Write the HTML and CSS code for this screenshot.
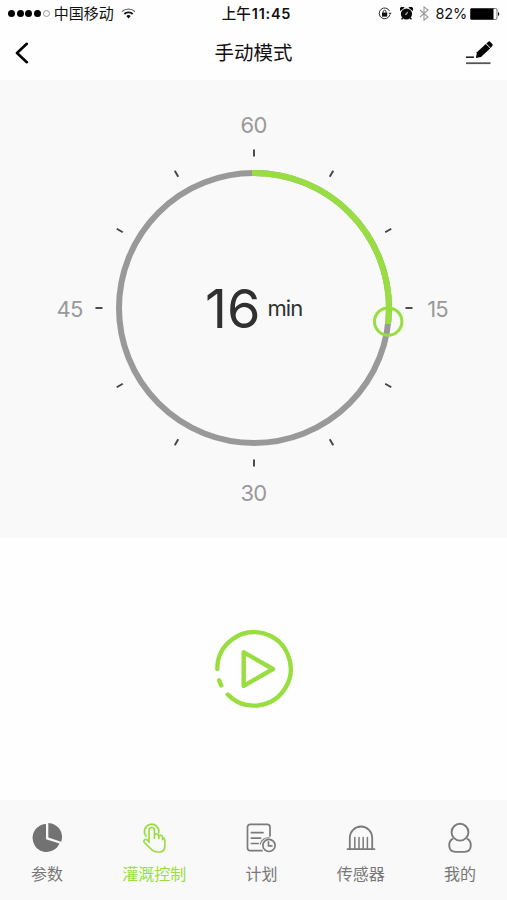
FILE: index.html
```html
<!DOCTYPE html>
<html lang="zh-CN">
<head>
<meta charset="UTF-8">
<meta name="viewport" content="width=device-width, initial-scale=1.0">
<title>手动模式</title>
<link rel="stylesheet" href="styles.css">
</head>
<body>

<div class="app">

  <!-- 状态栏 -->
  <div class="status">
    <div class="status-left">
      <div class="signal"><i></i><i></i><i></i><i></i><i class="off"></i></div>
      <span class="carrier">中国移动</span>
      <svg width="15" height="11" viewBox="0 0 15 11" fill="none" stroke="#111">
        <path d="M1 3.6a9.4 9.4 0 0 1 13 0" stroke-width="1.1" stroke="#555"/>
        <path d="M3.3 6a6.1 6.1 0 0 1 8.4 0" stroke-width="1.8"/>
        <path d="M5.3 8.1a3.1 3.1 0 0 1 4.4 0L7.5 10.4z" fill="#111" stroke="none"/>
      </svg>
    </div>
    <span class="time">上午<b>11:45</b></span>
    <div class="status-right">
      <svg class="lock" width="14" height="13" viewBox="0 0 14 13" fill="none" stroke="#333">
        <path d="M11.6 4.2A5.4 5.4 0 1 0 11.8 8"/>
        <path d="M10.4 5.8h3.2L12 8z" fill="#333" stroke="none"/>
        <rect x="4" y="5.6" width="5.2" height="4" fill="#111" stroke="none"/>
        <path d="M5.1 6V4.8a1.5 1.5 0 0 1 3 0V6"/>
      </svg>
      <svg width="13" height="13" viewBox="0 0 13 13" fill="#0a0a0a">
        <circle cx="6.5" cy="7" r="5.6"/>
        <path d="M.3 4A2.6 2.6 0 0 1 4.5.8zM12.7 4A2.6 2.6 0 0 0 8.5.8z"/>
        <path d="M2.7 10.8l-1 1.6M10.3 10.8l1 1.6" stroke="#0a0a0a" stroke-width="1.4"/>
        <path d="M7.4 4.8L6.7 7.2H5" fill="none" stroke="#fff" stroke-width=".8"/>
      </svg>
      <svg width="10" height="15" viewBox="0 0 10 15" fill="none" stroke="#999" stroke-width="1.1">
        <path d="M1 4l8 7-4 3.2V.8L9 4l-8 7"/>
      </svg>
      <span class="percent">82%</span>
      <svg width="30" height="12" viewBox="0 0 30 12">
        <rect x=".5" y=".5" width="26.5" height="11" rx="1.5" fill="#fff" stroke="#555" stroke-width=".8"/>
        <rect x=".5" y=".5" width="23" height="11" fill="#000"/>
        <path d="M28 4a2.2 2.2 0 0 1 0 4z" fill="#111"/>
      </svg>
    </div>
  </div>

  <!-- 导航栏 -->
  <header class="nav">
    <svg width="14" height="22" viewBox="0 0 14 22" fill="none" stroke="#000" stroke-width="2.6" stroke-linecap="round" stroke-linejoin="round">
      <path d="M11.8 1.8L2 11l9.8 9.2"/>
    </svg>
    <h1 class="nav-title">手动模式</h1>
    <svg width="28" height="24" viewBox="0 0 28 24">
      <path d="M1 16.2h8" stroke="#222" stroke-width="1.6"/>
      <path d="M1 22.2h24.5" stroke="#555" stroke-width="1.8"/>
      <path d="M10.9 17l1-5.8L20.8 3l4.3 4.6-9.1 8.4z" fill="#000"/>
      <path d="M21.4 2.5l1.9-1.7q1.1-.9 2.1.1l1.9 2.1q.9 1.1-.1 2.1L25.7 7z" fill="#000"/>
    </svg>
  </header>

  <!-- 时间表盘 -->
  <section class="dial">
    <svg width="420" height="420" viewBox="-210 -210 420 420">
      <g class="ticks">
        <path d="M0-158.5v7"/>
        <path d="M0-158.5v7" transform="rotate(30)"/>
        <path d="M0-158.5v7" transform="rotate(60)"/>
        <path d="M0-158.5v7" transform="rotate(90)"/>
        <path d="M0-158.5v7" transform="rotate(120)"/>
        <path d="M0-158.5v7" transform="rotate(150)"/>
        <path d="M0-158.5v7" transform="rotate(180)"/>
        <path d="M0-158.5v7" transform="rotate(210)"/>
        <path d="M0-158.5v7" transform="rotate(240)"/>
        <path d="M0-158.5v7" transform="rotate(270)"/>
        <path d="M0-158.5v7" transform="rotate(300)"/>
        <path d="M0-158.5v7" transform="rotate(330)"/>
      </g>
      <circle class="ring" r="135"/>
      <path class="progress" d="M-2-135H0A135 135 0 0 1 134 16"/>
      <circle class="knob" cx="134.2" cy="13.6" r="13.7"/>
      <g class="scale">
        <text x="-.5" y="-175.4">60</text>
        <text x="183.5" y="8.6">15</text>
        <text x="-.5" y="192.6">30</text>
        <text x="-184.5" y="8.6">45</text>
      </g>
      <text class="minutes" x="-49" y="19.5">16</text>
      <text class="unit" x="13.5" y="8">min</text>
    </svg>
  </section>

  <!-- 开始灌溉 -->
  <section class="action">
    <svg width="80" height="80" viewBox="-40 -40 80 80" fill="none" stroke="#98de40" stroke-width="4.4" stroke-linecap="round" stroke-linejoin="round">
      <path d="M-36.7 0A36.7 36.7 0 1 1-26.2 25.6"/>
      <path d="M-34.9 11.3a37 37 0 0 0 2.2 5.1"/>
      <path d="M-10.3-16.7V16.9L19 0z"/>
    </svg>
  </section>

  <!-- 底部标签栏 -->
  <nav class="tabs">
    <div class="tab">
      <svg width="32" height="32" viewBox="0 0 32 32" fill="#727272">
        <path d="M15 2A14 14 0 1 0 28.4 21.6L15 17.2z"/>
        <path d="M17.3 1A14 14 0 0 1 30.2 19.8L17.3 15.6z"/>
      </svg>
      <span>参数</span>
    </div>
    <div class="tab tab--on">
      <svg width="32" height="32" viewBox="0 0 32 32" fill="none" stroke="#98de40" stroke-width="1.7" stroke-linecap="round" stroke-linejoin="round">
        <path d="M8.2 14.2A7.2 7.2 0 1 1 20.7 10.7"/>
        <path d="M11.1 20V8.2a2.7 2.7 0 0 1 5.4 0v8M16.5 13.2q.3-1.6 2-1.4 2 .1 2.3 2v2.7M20.8 14.6q.2-1.4 1.9-1.2 1.7.2 1.9 2v2M24.600 16.300q2-.8 2.200 1.800v6.200q0 5.700-5.600 5.700h-2q-2.700 0-4.700-1.600l-8.200-7.900q-1.100-1.300.1-2.500 1.300-1.200 2.700-.2l2 2.200"/>
      </svg>
      <span>灌溉控制</span>
    </div>
    <div class="tab">
      <svg width="32" height="32" viewBox="0 0 32 32" fill="none" stroke="#7b7b7b" stroke-width="1.7" stroke-linecap="round" stroke-linejoin="round">
        <path d="M17 28.7H5.3q-2.8 0-2.8-2.8V5.1q0-2.8 2.8-2.8h16.9q2.8 0 2.8 2.8V14"/>
        <path d="M6.4 10.7H18M6.4 16.2h9.2M6.4 21.5h6.8"/>
        <path d="M15.3 22.2a8 8 0 0 1 8.9-6.4" stroke-width="1.1"/>
        <circle cx="24" cy="23.4" r="6.1"/>
        <path d="M23.5 19.9v4h3.3"/>
      </svg>
      <span>计划</span>
    </div>
    <div class="tab">
      <svg width="32" height="32" viewBox="0 0 32 32" fill="none" stroke="#7b7b7b" stroke-width="1.8" stroke-linecap="round">
        <path d="M2.5 27.1h27"/>
        <path d="M4.8 26.5V15.7a11.2 11.2 0 0 1 22.4 0V26.5"/>
        <path d="M9.8 15.5v11M14 15.5v11M18.2 15.5v11M22.4 15.5v11" stroke-width="1.5"/>
      </svg>
      <span>传感器</span>
    </div>
    <div class="tab">
      <svg width="32" height="32" viewBox="0 0 32 32" fill="none" stroke="#7b7b7b" stroke-width="1.9" stroke-linejoin="round">
        <circle cx="16" cy="10.2" r="8.4"/>
        <path d="M9 16.7q-3.8 2-3.8 6.4 0 6.8 6.3 6.8h9q6.3 0 6.3-6.8 0-4.4-3.8-6.4"/>
      </svg>
      <span>我的</span>
    </div>
  </nav>

</div>

</body>
</html>
```
FILE: styles.css
```css
:root {
  --green: #98de40;
  --panel: #f9f9f9;
  --gray: #999999;
  --text: #303030;
}
* { margin: 0; padding: 0; box-sizing: border-box; }
body {
  background: #fefefe;
  color: var(--text);
  font-family: "Inter", "Noto Sans CJK SC", sans-serif;
}
svg { display: block; flex: none; }
.app {
  height: 900px;
  display: flex;
  flex-direction: column;
}

/* ---------- 状态栏 ---------- */
.status {
  height: 27px;
  padding: 0 7px 0 8px;
  display: grid;
  grid-template-columns: 1fr auto 1fr;
  align-items: center;
  line-height: 27px;
  color: #111;
}
.status-left, .status-right { display: flex; align-items: center; }
.signal { display: flex; gap: 1.7px; }
.signal i { width: 7px; height: 7px; border-radius: 50%; background: #000; }
.signal .off { background: none; border: 1px solid #999; }
.carrier { font-size: 15px; margin: 0 7px 0 4px; }
.time { font-size: 14.5px; font-weight: 500; padding-left: 5px; }
.time b { font-weight: 600; letter-spacing: 0.75px; margin-left: 1px; }
.status-right { justify-content: flex-end; gap: 6px; }
.lock { margin-right: 2px; }
.percent { font-size: 14.5px; letter-spacing: -0.2px; margin: 0 -3px 0 1px; }

/* ---------- 导航栏 ---------- */
.nav {
  height: 53px;
  padding: 0 14px 2px 15px;
  display: flex;
  align-items: center;
  justify-content: space-between;
}
.nav-title {
  font-size: 19.5px;
  font-weight: 400;
  line-height: 28px;
  color: #111;
  margin-left: 13px;
}

/* ---------- 表盘 ---------- */
.dial {
  height: 458px;
  padding-top: 18px;
  background: var(--panel);
  display: flex;
  justify-content: center;
}
.ticks { stroke: #444; stroke-width: 1.9; }
.ring { fill: none; stroke: var(--gray); stroke-width: 6; }
.progress { fill: none; stroke: var(--green); stroke-width: 6; }
.knob { fill: none; stroke: var(--green); stroke-width: 3; }
.scale {
  font-size: 22px;
  letter-spacing: -0.8px;
  fill: var(--gray);
  text-anchor: middle;
}
.minutes { font-size: 54px; fill: var(--text); }
.unit { font-size: 22px; letter-spacing: -0.9px; fill: var(--text); }

/* ---------- 开始按钮 ---------- */
.action {
  flex: 1;
  display: flex;
  align-items: center;
  justify-content: center;
}

/* ---------- 标签栏 ---------- */
.tabs {
  height: 100px;
  padding: 22px 31px 0;
  background: var(--panel);
  display: flex;
  justify-content: space-between;
}
.tab {
  display: flex;
  flex-direction: column;
  align-items: center;
  gap: 8px;
  font-size: 16px;
  line-height: 24px;
  color: #777;
}
.tab--on { color: var(--green); }
```
